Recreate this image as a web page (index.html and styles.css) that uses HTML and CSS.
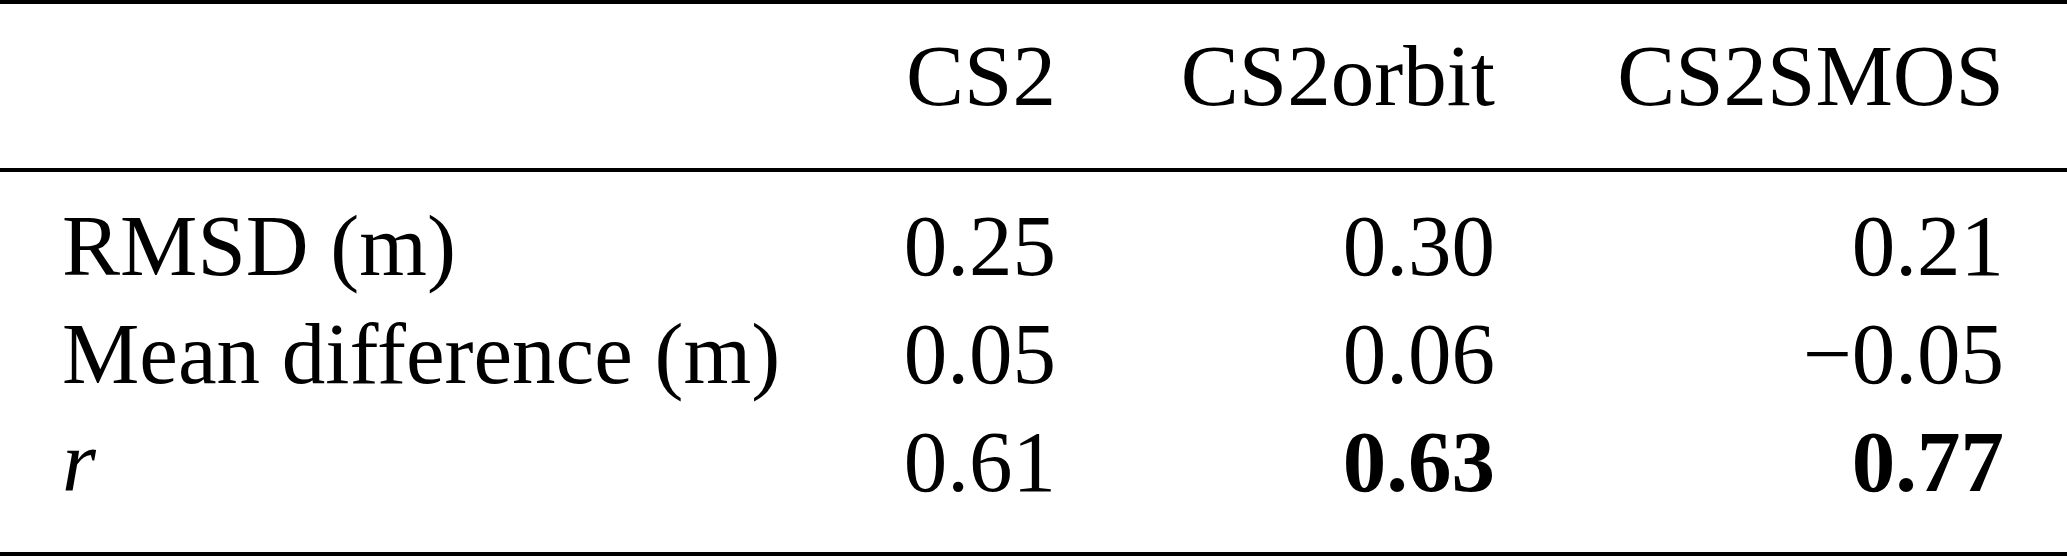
FILE: index.html
```html
<!DOCTYPE html>
<html>
  <head>
    <title>Comparison statistics</title>
    <link rel="stylesheet" href="styles.css">
  </head>
  <body>
    <table class="stats">
      <colgroup>
        <col class="col_label">
        <col class="col_cs2">
        <col class="col_orbit">
        <col class="col_smos">
      </colgroup>
      <thead>
        <tr>
          <th class="label"></th>
          <th class="num">CS2</th>
          <th class="num">CS2orbit</th>
          <th class="num">CS2SMOS</th>
        </tr>
      </thead>
      <tbody>
        <tr class="first">
          <td class="label">RMSD (m)</td>
          <td class="num">0.25</td>
          <td class="num">0.30</td>
          <td class="num">0.21</td>
        </tr>
        <tr>
          <td class="label">Mean difference (m)</td>
          <td class="num">0.05</td>
          <td class="num">0.06</td>
          <td class="num">&minus;0.05</td>
        </tr>
        <tr class="last">
          <td class="label"><i>r</i></td>
          <td class="num">0.61</td>
          <td class="num best">0.63</td>
          <td class="num best">0.77</td>
        </tr>
      </tbody>
    </table>
  </body>
</html>
```

FILE: styles.css
```css
body {
  margin: 0;
  background: #ffffff;
  color: #000000;
  font-family: "Liberation Serif", "Times New Roman", serif;
}

/* Tabelle im booktabs-Stil */
.stats {
  width: 2067px;
  table-layout: fixed;
  border-collapse: separate;
  border-spacing: 0;
  font-size: 87px;
  line-height: 108px;
}

.col_label { width: 845px; }
.col_cs2   { width: 274px; }
.col_orbit { width: 439px; }
.col_smos  { width: 509px; }

.stats th,
.stats td {
  padding: 0;
  white-space: nowrap;
  font-weight: normal;
}

.stats .label {
  text-align: left;
  padding-left: 62px;
}

.stats .num {
  text-align: right;
  padding-right: 63px;
}

/* Kopfzeile mit oberer und mittlerer Linie */
.stats thead th {
  border-top: 4px solid #000;
  border-bottom: 4px solid #000;
  padding-top: 18px;
  padding-bottom: 38px;
}

.stats tr.first td {
  padding-top: 20px;
}

.stats tr.last td {
  padding-bottom: 36px;
  border-bottom: 4px solid #000;
}

.stats .best {
  font-weight: bold;
}
```
